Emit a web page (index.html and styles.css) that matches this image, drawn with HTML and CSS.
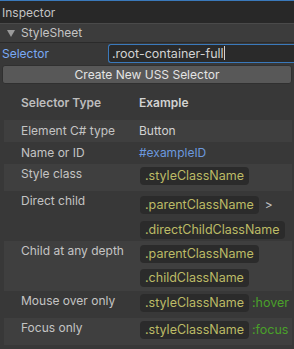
FILE: index.html
```html
<!DOCTYPE html>
<html lang="en">
  <head>
    <meta charset="UTF-8" />
    <title>Inspector</title>
    <link rel="stylesheet" href="styles.css">
  </head>
  <body>
    <div class="window">
      <!-- Tab bar -->
      <div class="tab-bar">Inspector</div>

      <!-- Foldout header -->
      <div class="foldout">
        <span class="arrow"></span>
        StyleSheet
      </div>

      <!-- Selector field -->
      <div class="field-row">
        <label class="field-label">Selector</label>
        <div class="text-input">.root-container-full<span class="caret"></span></div>
      </div>
      <button class="create-button">Create New USS Selector</button>

      <!-- Selector cheat sheet -->
      <div class="table">
        <div class="row head">
          <div class="col-type">Selector Type</div>
          <div class="col-example">Example</div>
        </div>

        <div class="row shaded">
          <div class="col-type">Element C# type</div>
          <div class="col-example">Button</div>
        </div>

        <div class="row">
          <div class="col-type">Name or ID</div>
          <div class="col-example link">#exampleID</div>
        </div>

        <div class="row shaded tall">
          <div class="col-type">Style class</div>
          <div class="col-example">
            <span class="pill">.styleClassName</span>
          </div>
        </div>

        <div class="row double">
          <div class="col-type">Direct child</div>
          <div class="col-example stack">
            <div class="line">
              <span class="pill">.parentClassName</span>
              <span class="gt">&gt;</span>
            </div>
            <div class="line">
              <span class="pill">.directChildClassName</span>
            </div>
          </div>
        </div>

        <div class="row shaded double">
          <div class="col-type">Child at any depth</div>
          <div class="col-example stack">
            <div class="line"><span class="pill">.parentClassName</span></div>
            <div class="line"><span class="pill">.childClassName</span></div>
          </div>
        </div>

        <div class="row tall">
          <div class="col-type">Mouse over only</div>
          <div class="col-example">
            <span class="pill">.styleClassName</span>
            <span class="pseudo">:hover</span>
          </div>
        </div>

        <div class="row shaded tall">
          <div class="col-type">Focus only</div>
          <div class="col-example">
            <span class="pill">.styleClassName</span>
            <span class="pseudo">:focus</span>
          </div>
        </div>
      </div>
    </div>
  </body>
</html>
```

FILE: styles.css
```css
body {
  margin: 0;
  background-color: #383838;
  font-family: Inter, "Noto Sans", sans-serif;
  font-size: 12px;
  color: #c4c4c4;
}

.window {
  width: 294px;
  height: 349px;
  overflow: hidden;
  border-top: 1px solid #3a79bb;
  box-sizing: border-box;
}

.tab-bar {
  height: 22px;
  line-height: 23px;
  padding-left: 2px;
  background-color: #282828;
  color: #c4c4c4;
  font-size: 12px;
  border-bottom: 1px solid #4a4a4a;
}

.foldout {
  height: 18px;
  line-height: 18px;
  padding-left: 7px;
  background-color: #3c3c3c;
  font-size: 12px;
  color: #c4c4c4;
  display: flex;
  align-items: center;
  border-bottom: 1px solid #2a2a2a;
}

.arrow {
  width: 0;
  height: 0;
  border-left: 4px solid transparent;
  border-right: 4px solid transparent;
  border-top: 7px solid #9a9a9a;
  margin-right: 6px;
}

.field-row {
  display: flex;
  align-items: center;
  height: 19px;
  margin-top: 1px;
}

.field-label {
  width: 106px;
  padding-left: 2px;
  color: #7aaaf5;
  font-size: 12px;
}

.text-input {
  flex: 1;
  height: 17px;
  line-height: 17px;
  padding-left: 3px;
  background-color: #2a2a2a;
  border: 1px solid #3a79bb;
  border-right: none;
  border-radius: 3px 0 0 3px;
  color: #d2d2d2;
  font-size: 12.5px;
}

.caret {
  display: inline-block;
  width: 1px;
  height: 14px;
  background-color: #d2d2d2;
  vertical-align: -2px;
}

.create-button {
  display: block;
  width: 290px;
  height: 19px;
  margin: 2px 2px 0;
  padding: 0;
  background-color: #585858;
  border: 1px solid #303030;
  border-radius: 3px;
  color: #e4e4e4;
  font-family: Inter, "Noto Sans", sans-serif;
  font-size: 12px;
  line-height: 17px;
}

.table {
  margin: 9px 2px 0 4px;
}

.row {
  display: flex;
  min-height: 22px;
  line-height: 22px;
}

.row.head {
  height: 27px;
  font-weight: 600;
  color: #bdbdbd;
  line-height: 20px;
}

.row.shaded {
  background-color: #3f3f3f;
}

.row.tall {
  height: 27px;
  line-height: 20px;
}

.row.double {
  height: 50px;
  line-height: 20px;
}

.col-type {
  width: 118px;
  padding-left: 17px;
}

.col-example {
  flex: 1;
  display: flex;
  align-items: flex-start;
  color: #d2d2d2;
}

.row.tall .col-example {
  padding-top: 3px;
}

.col-example.stack {
  flex-direction: column;
  padding-top: 4px;
  gap: 6px;
}

.line {
  display: flex;
  align-items: center;
}

.link {
  color: #6c98de;
}

.pill {
  display: inline-block;
  height: 18px;
  line-height: 18px;
  margin-left: 1px;
  padding: 0 5px;
  background-color: #2b2b2b;
  border-radius: 4px;
  color: #bdbb66;
  font-size: 12.5px;
}

.gt {
  margin-left: 6px;
  color: #c4c4c4;
}

.pseudo {
  margin-left: 3px;
  line-height: 18px;
  color: #4aa02a;
  font-size: 12.5px;
}
```
